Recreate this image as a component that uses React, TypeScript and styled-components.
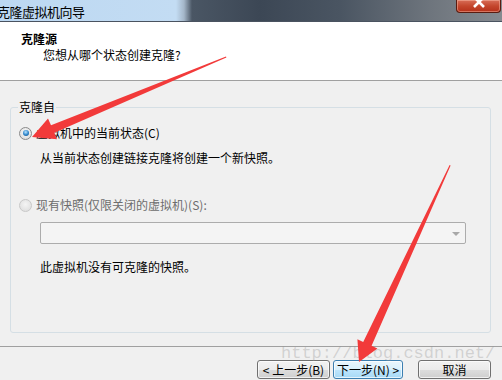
import React from 'react';
import styled, { createGlobalStyle } from 'styled-components';

const GlobalStyle = createGlobalStyle`
  html, body {
    margin: 0;
    padding: 0;
    background: #f0f0f0;
  }
  body {
    font-family: 'Noto Sans CJK SC', 'Noto Sans', sans-serif;
    font-size: 12px;
    color: #000;
  }
`;

// 창 전체
const Window = styled.div`
  position: relative;
  width: 502px;
  height: 380px;
  overflow: hidden;
  background: #f0f0f0;
  display: flex;
  flex-direction: column;
`;

// 타이틀바 (aero glass)
const TitleBar = styled.div`
  height: 21px;
  flex: none;
  display: flex;
  align-items: center;
  justify-content: space-between;
  border-bottom: 1px solid #4a5360;
  background: linear-gradient(
    to right,
    #bcd8f2 0,
    #c3dcf3 176px,
    #a4b6c8 184px,
    #4a5664 192px,
    #3c4755 260px,
    #4a5562 340px,
    #6e757d 430px,
    #858a90 502px
  );
`;

const Title = styled.span`
  font-size: 13px;
  line-height: 16px;
  margin-left: -3px;
  margin-top: 2px;
  color: #000;
  letter-spacing: -0.5px;
`;

const CloseButton = styled.div`
  align-self: flex-start;
  width: 43px;
  height: 12px;
  margin-right: 1px;
  border: 1px solid #5a1c10;
  border-top: none;
  border-radius: 0 0 4px 4px;
  background: linear-gradient(to bottom, #d86e58 0, #c4472d 50%, #b5301a 100%);
  box-shadow: inset 0 0 0 1px rgba(255, 200, 180, 0.45);
  display: flex;
  justify-content: center;
  overflow: hidden;
`;

// 상단 흰색 헤더
const Header = styled.div`
  height: 59px;
  flex: none;
  box-sizing: border-box;
  background: #fff;
  border-bottom: 1px solid #a0a0a0;
  padding: 9px 0 0 21px;
`;

const HeaderTitle = styled.div`
  font-weight: bold;
  line-height: 16px;
  font-size: 12px;
`;

const HeaderSub = styled.div`
  line-height: 16px;
  margin: 0 0 0 22px;
`;

const Body = styled.div`
  height: 265px;
  flex: none;
  box-sizing: border-box;
  padding: 18px 11px 0 10px;
`;

const Group = styled.fieldset`
  margin: 0;
  height: 234px;
  box-sizing: border-box;
  border: 1px solid #d5dfe5;
  border-radius: 3px;
  padding: 10px 8px 0 8px;
`;

const Legend = styled.legend`
  padding: 0 1px;
  margin-left: -1px;
  line-height: 16px;
`;

const Option = styled.label<{ $disabled?: boolean }>`
  display: flex;
  align-items: center;
  gap: 4px;
  height: 16px;
  line-height: 16px;
  margin-top: ${(p) => (p.$disabled ? '31px' : '0')};
  color: ${(p) => (p.$disabled ? '#6d6d6d' : '#000')};
`;

const Radio = styled.span<{ $checked?: boolean; $disabled?: boolean }>`
  width: 11px;
  height: 11px;
  flex: none;
  border-radius: 50%;
  border: 1px solid ${(p) => (p.$disabled ? '#c8c8c8' : '#8a8a8a')};
  background: ${(p) =>
    p.$disabled
      ? 'radial-gradient(circle at 50% 40%, #f4f4f4 0, #e2e2e2 70%)'
      : 'radial-gradient(circle at 50% 40%, #fdfdfd 0, #dcdcdc 80%)'};
  display: flex;
  align-items: center;
  justify-content: center;

  &::after {
    content: '';
    display: ${(p) => (p.$checked ? 'block' : 'none')};
    width: 6px;
    height: 6px;
    border-radius: 50%;
    background: radial-gradient(circle at 45% 35%, #b9e6ff 0, #2b82c9 55%, #16476f 100%);
  }
`;

const Hint = styled.div<{ $gap: number }>`
  margin: ${(p) => p.$gap}px 0 0 21px;
  line-height: 16px;
`;

const Combo = styled.div`
  margin: 9px 0 0 21px;
  width: 426px;
  height: 22px;
  box-sizing: border-box;
  border: 1px solid #acacac;
  border-radius: 2px;
  background: #f4f4f4;
  display: flex;
  align-items: center;
  justify-content: flex-end;
  padding-right: 5px;
`;

const ComboArrow = styled.span`
  width: 0;
  height: 0;
  border-left: 4px solid transparent;
  border-right: 4px solid transparent;
  border-top: 4px solid #a8a8a8;
  margin-top: 1px;
`;

// 하단 버튼 영역
const Footer = styled.div`
  flex: 1;
  border-top: 1px solid #a0a0a0;
  display: flex;
  justify-content: flex-end;
  align-items: flex-start;
  padding: 13px 11px 0 0;
`;

const Button = styled.button<{ $focused?: boolean; $gapLeft?: number }>`
  font-family: 'Noto Sans CJK SC', sans-serif;
  font-size: 12px;
  line-height: 14px;
  width: ${(p) => (p.$focused ? '70px' : '73px')};
  height: 19px;
  padding: 0;
  margin-left: ${(p) => p.$gapLeft ?? 0}px;
  color: #000;
  border-radius: 3px;
  border: 1px solid ${(p) => (p.$focused ? '#3c7fb1' : '#707070')};
  background: ${(p) =>
    p.$focused
      ? 'linear-gradient(to bottom, #eaf6fd 0, #d9f0fc 50%, #bee6fd 51%, #a7d9f5 100%)'
      : 'linear-gradient(to bottom, #f2f2f2 0, #ebebeb 50%, #dddddd 51%, #cfcfcf 100%)'};
  box-shadow: inset 0 0 0 1px rgba(255, 255, 255, 0.7);
  white-space: pre;
`;

const Watermark = styled.div`
  position: absolute;
  left: 281px;
  top: 344px;
  font-family: 'Liberation Mono', monospace;
  font-size: 17px;
  line-height: 20px;
  color: rgba(150, 150, 150, 0.35);
  pointer-events: none;
`;

const Overlay = styled.svg`
  position: absolute;
  left: 0;
  top: 0;
  pointer-events: none;
`;

function App() {
  return (
    <>
      <GlobalStyle />
      <Window>
        <TitleBar>
          <Title>克隆虚拟机向导</Title>
          <CloseButton>
            <svg width="12" height="8" viewBox="0 0 12 8">
              <path d="M1 -3 L11 7 M11 -3 L1 7" stroke="#fff" strokeWidth="2.6" />
            </svg>
          </CloseButton>
        </TitleBar>
        <Header>
          <HeaderTitle>克隆源</HeaderTitle>
          <HeaderSub>您想从哪个状态创建克隆?</HeaderSub>
        </Header>
        <Body>
          <Group>
            <Legend>克隆自</Legend>
            <Option>
              <Radio $checked />
              虚拟机中的当前状态(C)
            </Option>
            <Hint $gap={9}>从当前状态创建链接克隆将创建一个新快照。</Hint>
            <Option $disabled>
              <Radio $disabled />
              现有快照(仅限关闭的虚拟机)(S):
            </Option>
            <Combo>
              <ComboArrow />
            </Combo>
            <Hint $gap={15}>此虚拟机没有可克隆的快照。</Hint>
          </Group>
        </Body>
        <Footer>
          <Button>{'< 上一步(B)'}</Button>
          <Button $focused $gapLeft={3}>{'下一步(N) >'}</Button>
          <Button $gapLeft={15}>取消</Button>
        </Footer>
        <Watermark>http://blog.csdn.net/</Watermark>
        <Overlay width="502" height="380" viewBox="0 0 502 380">
          <polygon
            points="226,56.6 226.4,57.6 54.4,132.8 57,139.2 32,137 48,118.4 51,125.2"
            fill="#f23a3a"
          />
          <polygon
            points="449.6,165 450.6,165.4 371.6,345.8 377.4,348.4 359,362 357.4,339.2 363.2,342"
            fill="#f23a3a"
          />
        </Overlay>
      </Window>
    </>
  );
}

export default App;
